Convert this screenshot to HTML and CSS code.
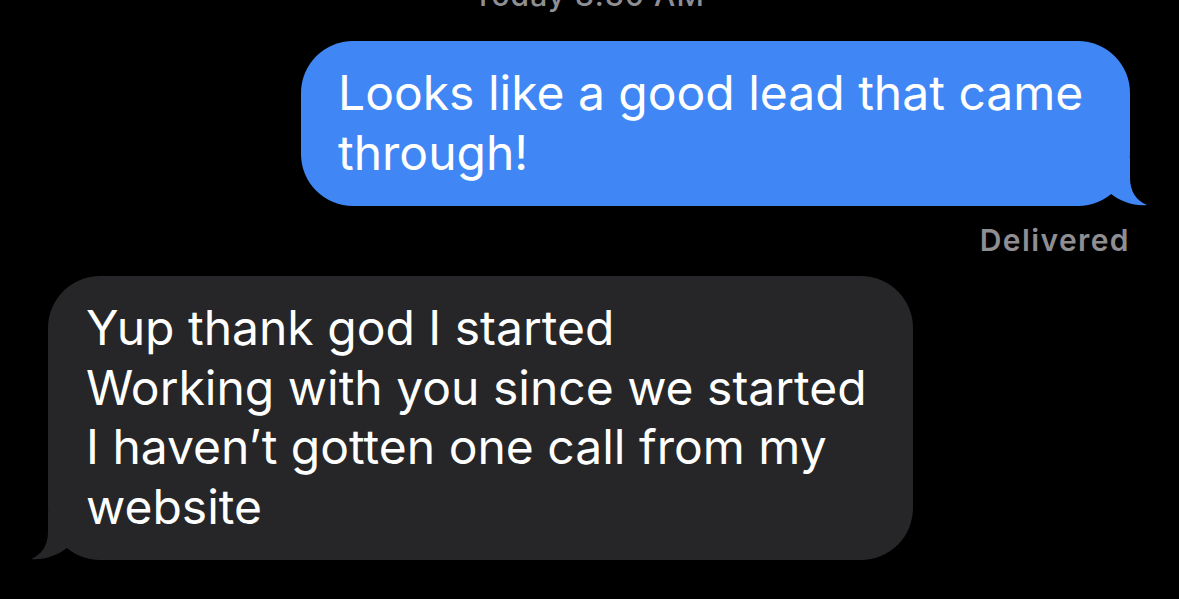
FILE: index.html
```html
<!DOCTYPE html>
<html lang="en">
<head>
  <meta charset="UTF-8">
  <meta name="viewport" content="width=device-width, initial-scale=1.0">
  <title>Messages</title>
  <link rel="stylesheet" href="styles.css">
</head>
<body>
  <div class="thread">
    <div class="stamp">Today 8:30 AM</div>

    <div class="bubble sent">
      Looks like a good lead that came through!
      <svg class="tail" viewBox="0 0 57 56" width="57" height="56">
        <path d="M40 8 L40 28 C40 42 47 51 57 55 C46 56.5 30 52 20 43 L0 30 L0 8 Z"/>
      </svg>
    </div>
    <div class="status">Delivered</div>

    <div class="bubble received">
      Yup thank god I started<br>
      Working with you since we started<br>
      I haven’t gotten one call from my website
      <svg class="tail" viewBox="0 0 57 56" width="57" height="56">
        <path d="M40 8 L40 28 C40 42 47 51 57 55 C46 56.5 30 52 20 43 L0 30 L0 8 Z"/>
      </svg>
    </div>
  </div>
</body>
</html>
```

FILE: styles.css
```css
body {
  margin: 0;
  background-color: #000;
  font-family: Inter, "Noto Sans", sans-serif;
  overflow: hidden;
}
.thread {
  display: flex;
  flex-direction: column;
  padding: 0 49px 0 48px;
}
.stamp {
  margin-top: -22px;
  text-align: center;
  font-size: 30px;
  line-height: 34px;
  letter-spacing: 1px;
  font-weight: 500;
  color: #8e8e93;
}
.bubble {
  position: relative;
  box-sizing: border-box;
  padding: 22px 38px 24px;
  border-radius: 52px;
  font-size: 48px;
  line-height: 59.5px;
  color: #fff;
}
.bubble .tail {
  position: absolute;
  bottom: 0;
}
.sent {
  align-self: flex-end;
  width: 829px;
  margin-top: 29px;
  padding-left: 37px;
  background-color: #4087f5;
}
.sent .tail {
  right: -17px;
  fill: #4087f5;
}
.received {
  align-self: flex-start;
  width: 865px;
  margin-top: 19px;
  padding-left: 38px;
  padding-right: 20px;
  background-color: #262628;
}
.received .tail {
  left: -17px;
  fill: #262628;
  transform: scaleX(-1);
}
.status {
  align-self: flex-end;
  margin-top: 17px;
  font-size: 30px;
  line-height: 34px;
  letter-spacing: 1.4px;
  font-weight: 600;
  color: #8e8e93;
}
```
